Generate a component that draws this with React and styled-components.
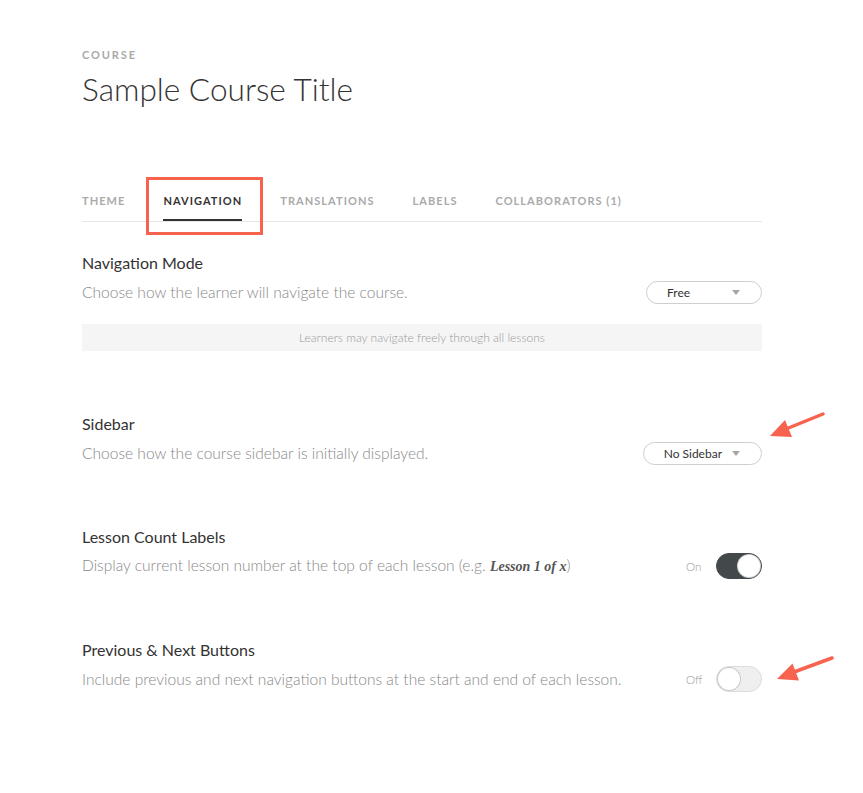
import React from "react";
import styled, { createGlobalStyle } from "styled-components";

const Global = createGlobalStyle`
  html, body { margin: 0; padding: 0; background: #fff; }
  body { font-family: Lato, "Open Sans", "Liberation Sans", sans-serif; color: #333; -webkit-font-smoothing: antialiased; }
  * { box-sizing: border-box; }
`;

const Page = styled.div`
  position: relative;
  width: 863px;
  min-height: 793px;
  padding: 48px 0 0 82px;
`;

const Column = styled.div`
  width: 680px;
`;

const Eyebrow = styled.div`
  font-size: 11px;
  line-height: 14px;
  font-weight: 700;
  letter-spacing: 1.9px;
  color: #a9a9a9;
  text-transform: uppercase;
`;

const Title = styled.h1`
  margin: 9px 0 0;
  font-size: 31.6px;
  line-height: 36px;
  font-weight: 300;
  color: #333;
`;

const TabBar = styled.nav`
  margin-top: 87px;
  display: flex;
  gap: 38px;
  border-bottom: 1px solid #e6e6e6;
`;

const Tab = styled.div`
  font-size: 11px;
  line-height: 14px;
  font-weight: 700;
  letter-spacing: 1.05px;
  text-transform: uppercase;
  padding-bottom: 11px;
  color: ${(p) => (p.$active ? "#333" : "#aaa")};
  border-bottom: 2px solid ${(p) => (p.$active ? "#333" : "transparent")};
`;

const Section = styled.section`
  margin-top: ${(p) => p.$top}px;
`;

const Heading = styled.h2`
  margin: 0 0 6px;
  font-size: 16px;
  line-height: 20px;
  font-weight: 400;
  color: #333;
`;

const Row = styled.div`
  display: flex;
  align-items: center;
  justify-content: space-between;
  min-height: 26px;
`;

const Description = styled.p`
  margin: 0;
  font-size: 15.55px;
  line-height: 20px;
  font-weight: 300;
  color: #888;
`;

const Example = styled.em`
  font-family: "Liberation Serif", "DejaVu Serif", serif;
  font-weight: 700;
  font-style: italic;
  font-size: 14px;
  color: #555;
`;

const Select = styled.div`
  display: flex;
  align-items: center;
  justify-content: space-between;
  min-width: 116px;
  height: 23px;
  padding: 0 21px 0 20px;
  border: 1px solid #cfcfcf;
  border-radius: 12px;
  font-size: 12px;
  color: #333;
  background: #fff;
`;

const Caret = styled.span`
  margin-left: 10px;
  width: 0;
  height: 0;
  border-left: 4.5px solid transparent;
  border-right: 4.5px solid transparent;
  border-top: 5px solid #a6a6a6;
`;

const Info = styled.div`
  margin-top: 19px;
  height: 27px;
  line-height: 27px;
  background: #f5f5f5;
  text-align: center;
  font-size: 12px;
  font-weight: 300;
  color: #9a9a9a;
`;

const ToggleWrap = styled.div`
  display: flex;
  align-items: center;
`;

const ToggleLabel = styled.span`
  width: 30px;
  font-size: 11.5px;
  font-weight: 300;
  color: #999;
`;

const Track = styled.div`
  display: flex;
  align-items: center;
  justify-content: ${(p) => (p.$on ? "flex-end" : "flex-start")};
  width: 46px;
  height: 26px;
  border-radius: 13px;
  padding: 1px;
  background: ${(p) => (p.$on ? "#43484b" : "#efefef")};
  border: 1px solid ${(p) => (p.$on ? "#43484b" : "#dcdcdc")};
`;

const Knob = styled.div`
  width: 22px;
  height: 22px;
  border-radius: 50%;
  background: #fff;
  box-shadow: 0 0 0 1px ${(p) => (p.$on ? "#cfcfcf" : "#c8c8c8")};
`;

const Highlight = styled.div`
  position: absolute;
  left: 146px;
  top: 177px;
  width: 117px;
  height: 58px;
  border: 3px solid #f8634f;
  pointer-events: none;
`;

const Overlay = styled.svg`
  position: absolute;
  left: 0;
  top: 0;
  pointer-events: none;
`;

function Dropdown({ value }) {
  return (
    <Select>
      <span>{value}</span>
      <Caret />
    </Select>
  );
}

function Toggle({ on }) {
  return (
    <ToggleWrap>
      <ToggleLabel>{on ? "On" : "Off"}</ToggleLabel>
      <Track $on={on}>
        <Knob $on={on} />
      </Track>
    </ToggleWrap>
  );
}

const tabs = ["Theme", "Navigation", "Translations", "Labels", "Collaborators (1)"];

export default function App() {
  return (
    <>
      <Global />
      <Page>
        <Column>
          <Eyebrow>Course</Eyebrow>
          <Title>Sample Course Title</Title>
          <TabBar>
            {tabs.map((t) => (
              <Tab key={t} $active={t === "Navigation"}>
                {t}
              </Tab>
            ))}
          </TabBar>

          <Section $top={31}>
            <Heading>Navigation Mode</Heading>
            <Row>
              <Description>Choose how the learner will navigate the course.</Description>
              <Dropdown value="Free" />
            </Row>
            <Info>Learners may navigate freely through all lessons</Info>
          </Section>

          <Section $top={63}>
            <Heading>Sidebar</Heading>
            <Row>
              <Description>Choose how the course sidebar is initially displayed.</Description>
              <Dropdown value="No Sidebar" />
            </Row>
          </Section>

          <Section $top={61}>
            <Heading>Lesson Count Labels</Heading>
            <Row>
              <Description>
                Display current lesson number at the top of each lesson (e.g. <Example>Lesson 1 of x</Example>)
              </Description>
              <Toggle on />
            </Row>
          </Section>

          <Section $top={61}>
            <Heading>Previous &amp; Next Buttons</Heading>
            <Row>
              <Description>
                Include previous and next navigation buttons at the start and end of each lesson.
              </Description>
              <Toggle on={false} />
            </Row>
          </Section>
        </Column>

        <Highlight />
        <Overlay width="863" height="793" viewBox="0 0 863 793">
          <line x1="823" y1="414" x2="786" y2="429" stroke="#f8634f" strokeWidth="3.5" strokeLinecap="round" />
          <polygon points="770,436 785,420 792,437" fill="#f8634f" />
          <line x1="832" y1="658" x2="794" y2="672" stroke="#f8634f" strokeWidth="3.5" strokeLinecap="round" />
          <polygon points="777,679 792.5,663.5 799,680.5" fill="#f8634f" />
        </Overlay>
      </Page>
    </>
  );
}
